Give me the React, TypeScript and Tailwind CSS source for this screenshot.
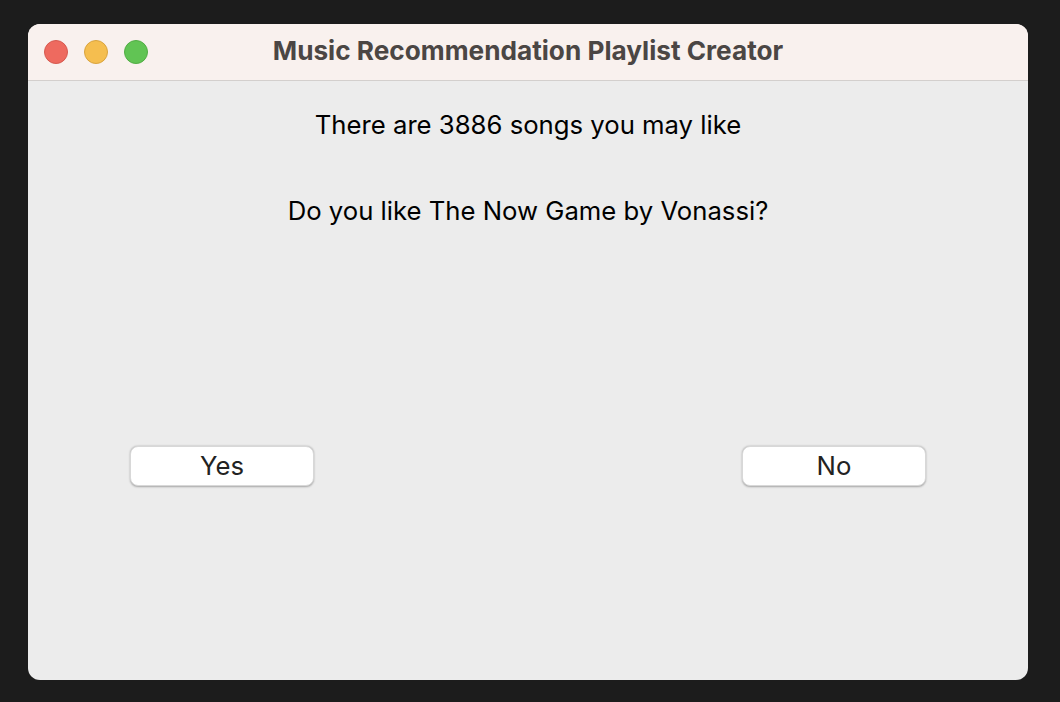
export default function App() {
  return (
    <main className="w-[1060px] h-[702px] bg-[#1c1c1c] pt-[24px] pl-[28px]" style={{ fontFamily: 'Inter, "Liberation Sans", Arial, sans-serif' }}>
      <div className="w-[1000px] h-[656px] rounded-[12px] overflow-hidden bg-[#ececec] flex flex-col">
        {/* Title bar */}
        <div className="h-[57px] bg-[#f9f1ee] border-b border-[#d3cfcd] flex items-center relative shrink-0">
          <div className="flex gap-[16px] pl-[16px]">
            <span className="w-[24px] h-[24px] rounded-full bg-[#ee6a5f] border border-[#d65a50]" />
            <span className="w-[24px] h-[24px] rounded-full bg-[#f5be4f] border border-[#d9a43f]" />
            <span className="w-[24px] h-[24px] rounded-full bg-[#61c454] border border-[#52ad45]" />
          </div>
          <div className="absolute inset-0 flex items-center justify-center pb-[3px] pointer-events-none">
            <span className="text-[26.2px] font-bold text-[#4b4644]">Music Recommendation Playlist Creator</span>
          </div>
        </div>

        {/* Body */}
        <div className="flex flex-col items-center text-[25.7px] text-black">
          <p className="mt-[30px] leading-[28px]">There are 3886 songs you may like</p>
          <p className="mt-[58px] leading-[28px]">Do you like The Now Game by Vonassi?</p>
        </div>

        <div className="flex justify-between px-[102px] mt-[221px]">
          <button className="w-[184px] h-[40px] pb-[1px] bg-white rounded-[8px] shadow-[0_0.5px_2px_rgba(0,0,0,0.3)] border border-[#d8d8d8] text-[25.7px] text-[#222]">
            Yes
          </button>
          <button className="w-[184px] h-[40px] pb-[1px] bg-white rounded-[8px] shadow-[0_0.5px_2px_rgba(0,0,0,0.3)] border border-[#d8d8d8] text-[25.7px] text-[#222]">
            No
          </button>
        </div>
      </div>
    </main>
  );
}
